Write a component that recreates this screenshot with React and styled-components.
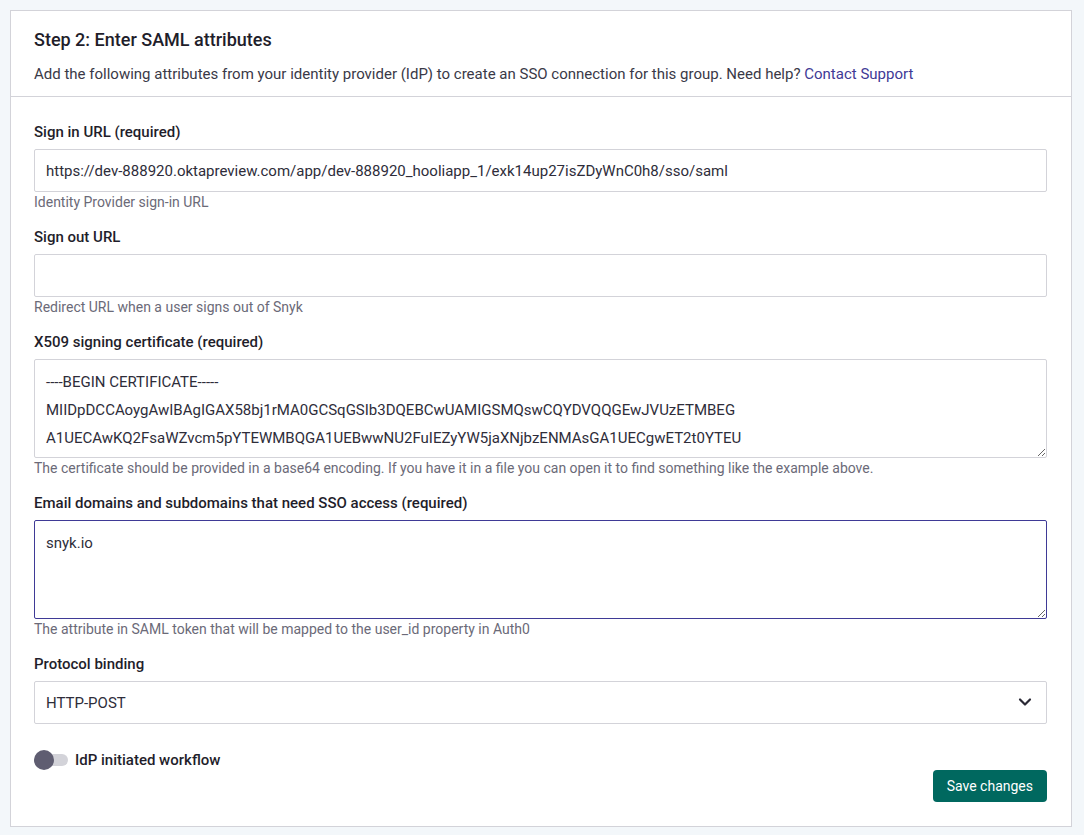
import React from 'react'
import styled, { createGlobalStyle } from 'styled-components'

const GlobalStyle = createGlobalStyle`
    body {
        margin: 0;
        background: #f3f7fa;
        font-family: Roboto, 'Liberation Sans', sans-serif;
        color: #1f1e2b;
    }
`

const Page = styled.div`
    padding: 10px 0 10px 10px;
`

const Card = styled.div`
    width: 1062px;
    box-sizing: border-box;
    background: #fff;
    border: 1px solid #d3d3d9;
`

const Header = styled.div`
    padding: 17px 23px 12px;
    border-bottom: 1px solid #d3d3d9;
`

const Title = styled.h2`
    margin: 0 0 12px;
    font-size: 18px;
    line-height: 24px;
    font-weight: 500;
    color: #1f1e2b;
`

const Intro = styled.p`
    margin: 0;
    font-size: 15px;
    line-height: 20px;
    color: #3a3947;
`

const Link = styled.a`
    color: #3f3a96;
    text-decoration: none;
`

const Form = styled.div`
    padding: 26px 24px 24px 23px;
    display: flex;
    flex-direction: column;
`

const Field = styled.div`
    display: flex;
    flex-direction: column;
    & + & {
        margin-top: 17px;
    }
`

const Label = styled.label`
    padding-top: 1px;
    font-size: 15px;
    line-height: 17px;
    font-weight: 500;
    color: #1f1e2b;
    margin-bottom: 8px;
`

const Input = styled.input`
    height: 43px;
    box-sizing: border-box;
    border: 1px solid #d3d3d9;
    border-radius: 2px;
    padding: 0 11px;
    font-family: Roboto, 'Liberation Sans', sans-serif;
    font-size: 15px;
    color: #2e2d3a;
    outline: none;
`

const TextArea = styled.textarea`
    height: 99px;
    box-sizing: border-box;
    border: 1px solid ${p => (p.$active ? '#3f3a96' : '#d3d3d9')};
    border-radius: 2px;
    padding: 8px 11px;
    font-family: Roboto, 'Liberation Sans', sans-serif;
    font-size: 15px;
    line-height: 28px;
    color: #2e2d3a;
    resize: vertical;
    outline: none;
    overflow: hidden;
    white-space: pre;
`

const Hint = styled.div`
    margin-top: 1px;
    font-size: 14px;
    line-height: 18px;
    color: #6b6a78;
`

const SelectWrap = styled.div`
    position: relative;
`

const Select = styled.select`
    width: 100%;
    height: 43px;
    box-sizing: border-box;
    border: 1px solid #d3d3d9;
    border-radius: 2px;
    padding: 0 11px;
    background: #fff;
    appearance: none;
    font-family: Roboto, 'Liberation Sans', sans-serif;
    font-size: 15px;
    color: #2e2d3a;
    outline: none;
`

const Chevron = styled.svg`
    position: absolute;
    right: 15px;
    top: 16px;
    pointer-events: none;
`

const ToggleRow = styled.div`
    display: flex;
    align-items: center;
    gap: 7px;
    margin-top: 26px;
    height: 20px;
`

const Track = styled.span`
    position: relative;
    width: 34px;
    height: 12px;
    border-radius: 6px;
    background: #d3d3d9;
`

const Knob = styled.span`
    position: absolute;
    left: 0;
    top: -4px;
    width: 20px;
    height: 20px;
    border-radius: 50%;
    background: #5f5d71;
`

const ToggleLabel = styled.span`
    font-size: 15px;
    font-weight: 500;
    color: #1f1e2b;
`

const Actions = styled.div`
    display: flex;
    justify-content: flex-end;
`

const Button = styled.button`
    height: 32px;
    padding: 0 14px;
    border: none;
    border-radius: 4px;
    background: #00685f;
    color: #fff;
    font-family: Roboto, 'Liberation Sans', sans-serif;
    font-size: 14px;
    cursor: pointer;
`

const cert = `----BEGIN CERTIFICATE-----
MIIDpDCCAoygAwIBAgIGAX58bj1rMA0GCSqGSIb3DQEBCwUAMIGSMQswCQYDVQQGEwJVUzETMBEG
A1UECAwKQ2FsaWZvcm5pYTEWMBQGA1UEBwwNU2FuIEZyYW5jaXNjbzENMAsGA1UECgwET2t0YTEU`

const App = () => (
    <Page>
        <GlobalStyle />
        <Card>
            <Header>
                <Title>Step 2: Enter SAML attributes</Title>
                <Intro>
                    Add the following attributes from your identity provider (IdP) to create an SSO connection for this group. Need help?{' '}
                    <Link href="#">Contact Support</Link>
                </Intro>
            </Header>
            <Form>
                <Field>
                    <Label>Sign in URL (required)</Label>
                    <Input defaultValue="https://dev-888920.oktapreview.com/app/dev-888920_hooliapp_1/exk14up27isZDyWnC0h8/sso/saml" />
                    <Hint>Identity Provider sign-in URL</Hint>
                </Field>
                <Field>
                    <Label>Sign out URL</Label>
                    <Input defaultValue="" />
                    <Hint>Redirect URL when a user signs out of Snyk</Hint>
                </Field>
                <Field>
                    <Label>X509 signing certificate (required)</Label>
                    <TextArea defaultValue={cert} />
                    <Hint>The certificate should be provided in a base64 encoding. If you have it in a file you can open it to find something like the example above.</Hint>
                </Field>
                <Field>
                    <Label>Email domains and subdomains that need SSO access (required)</Label>
                    <TextArea $active defaultValue="snyk.io" />
                    <Hint>The attribute in SAML token that will be mapped to the user_id property in Auth0</Hint>
                </Field>
                <Field>
                    <Label>Protocol binding</Label>
                    <SelectWrap>
                        <Select defaultValue="post">
                            <option value="post">HTTP-POST</option>
                            <option value="redirect">HTTP-Redirect</option>
                        </Select>
                        <Chevron width="14" height="10" viewBox="0 0 14 10" fill="none">
                            <path d="M2 2.5 L7 7.5 L12 2.5" stroke="#2a2935" strokeWidth="2.2" strokeLinecap="round" strokeLinejoin="round" />
                        </Chevron>
                    </SelectWrap>
                </Field>
                <ToggleRow>
                    <Track><Knob /></Track>
                    <ToggleLabel>IdP initiated workflow</ToggleLabel>
                </ToggleRow>
                <Actions>
                    <Button>Save changes</Button>
                </Actions>
            </Form>
        </Card>
    </Page>
)

export default App
